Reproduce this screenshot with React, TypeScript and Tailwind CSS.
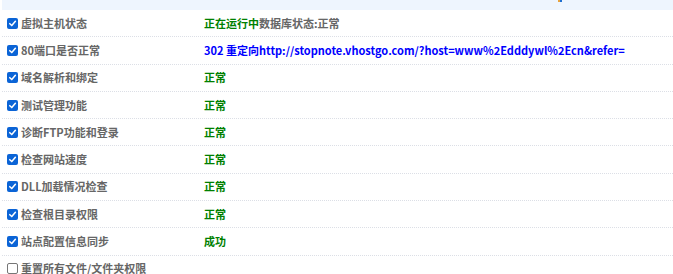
import React from "react";

type Row = { label: string; checked: boolean; status?: React.ReactNode };

const Green = ({ children }: { children: React.ReactNode }) => (
  <span className="font-bold text-[#008000]">{children}</span>
);

const rows: Row[] = [
  {
    label: "虚拟主机状态",
    checked: true,
    status: (
      <>
        <Green>正在运行中</Green>
        <span className="font-semibold text-[#666666]">数据库状态:正常</span>
      </>
    ),
  },
  {
    label: "80端口是否正常",
    checked: true,
    status: (
      <span className="font-bold text-[#0000ff]">
        302 重定向http://stopnote.vhostgo.com/?host=www%2Edddywl%2Ecn&amp;refer=
      </span>
    ),
  },
  { label: "域名解析和绑定", checked: true, status: <Green>正常</Green> },
  { label: "测试管理功能", checked: true, status: <Green>正常</Green> },
  { label: "诊断FTP功能和登录", checked: true, status: <Green>正常</Green> },
  { label: "检查网站速度", checked: true, status: <Green>正常</Green> },
  { label: "DLL加载情况检查", checked: true, status: <Green>正常</Green> },
  { label: "检查根目录权限", checked: true, status: <Green>正常</Green> },
  { label: "站点配置信息同步", checked: true, status: <Green>成功</Green> },
  { label: "重置所有文件/文件夹权限", checked: false },
];

function Box({ checked }: { checked: boolean }) {
  if (!checked)
    return (
      <span className="inline-block w-[11px] h-[11px] rounded-[2px] border border-[#767676] bg-white shrink-0" />
    );
  return (
    <span className="inline-flex items-center justify-center w-[11px] h-[11px] rounded-[2px] bg-[#0b64d6] shrink-0">
      <svg width="9" height="9" viewBox="0 0 10 10">
        <path d="M2 5.2 L4.2 7.3 L8.2 2.6" fill="none" stroke="white" strokeWidth="1.7" strokeLinecap="round" strokeLinejoin="round" />
      </svg>
    </span>
  );
}

export default function App() {
  return (
    <div
      className="w-[673px] h-[274px] overflow-hidden bg-white pl-[2px] text-[11px] leading-none"
      style={{ fontFamily: '"Noto Sans CJK SC", "Noto Sans", sans-serif' }}
    >
      <div className="relative h-[10px] bg-[#eef5fe]">
        <span className="absolute left-[556px] top-0 w-[2px] h-[2px] bg-[#e8a33d]" />
        <span className="absolute left-[558px] top-0 w-[2px] h-[2px] bg-[#1f6fd0]" />
      </div>
      {rows.map((r, i) => (
        <div
          key={i}
          className="flex items-center h-[27.3px] border-b border-dotted border-[#dcdfe6]"
        >
          <div className="flex items-center w-[202px] pl-[5px] gap-[3px]">
            <Box checked={r.checked} />
            <span className="font-semibold text-[#666666]">{r.label}</span>
          </div>
          <div className="whitespace-nowrap">{r.status}</div>
        </div>
      ))}
    </div>
  );
}
